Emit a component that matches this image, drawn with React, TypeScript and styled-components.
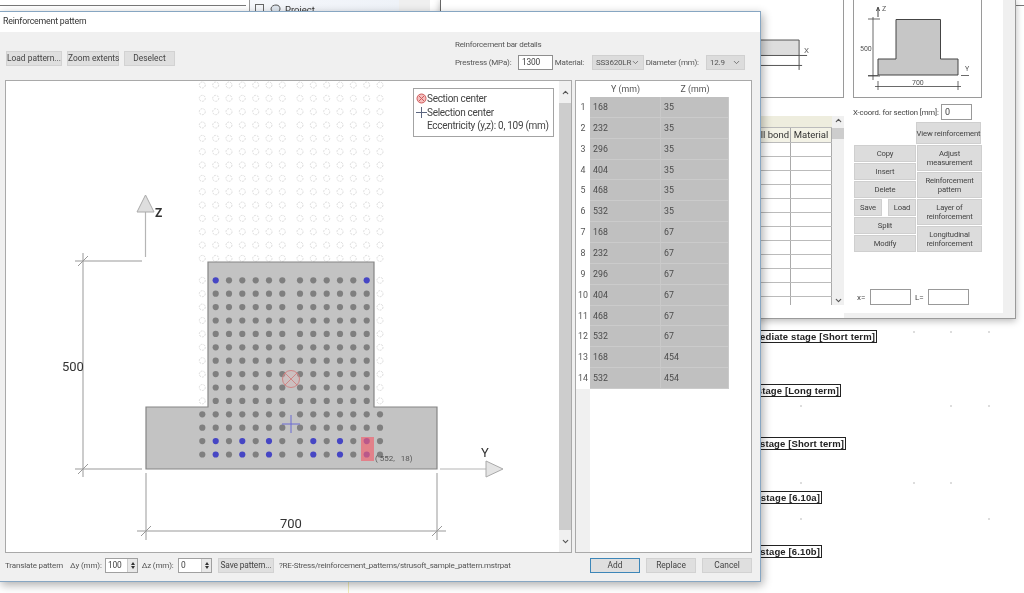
import React from 'react';
import { ChevronDown, ChevronUp } from 'lucide-react';
import styled, { createGlobalStyle } from 'styled-components';

const GlobalStyle = createGlobalStyle`
  html, body {
    margin: 0;
    padding: 0;
    background: #fff;
  }
  * {
    box-sizing: border-box;
  }
`;

const uiFont = `Roboto, 'Noto Sans', 'Liberation Sans', sans-serif`;

const Desktop = styled.div`
  position: relative;
  width: 1024px;
  height: 593px;
  overflow: hidden;
  background: #fff;
  font-family: ${uiFont};
  color: #444;
  filter: blur(0.3px);
`;

/* ---------- things behind the dialog ---------- */

const TopLeftPane = styled.div`
  position: absolute;
  left: 0;
  top: 0;
  width: 250px;
  height: 12px;
  border-right: 1px solid #999;
  &::before {
    content: '';
    display: block;
    margin-top: 5px;
    width: 246px;
    height: 1px;
    background: #777;
  }
`;

const TreePane = styled.div`
  position: absolute;
  left: 250px;
  top: 0;
  width: 180px;
  height: 12px;
  display: flex;
  align-items: flex-start;
  padding: 4px 0 0 5px;
  font-size: 9.5px;
  line-height: 11px;
  color: #333;
  background: linear-gradient(90deg, #f5f7fb 0, #eef2f8 83%, #efefef 83%);
`;

const TreeBox = styled.span`
  width: 9px;
  height: 9px;
  flex: none;
  border: 1px solid #666;
`;

const TreeIcon = styled.svg`
  width: 11px;
  height: 9px;
  flex: none;
  margin: 0 4px 0 6px;
`;

const CanvasLabel = styled.div<{ $top: number; $right: number }>`
  position: absolute;
  top: ${(p) => p.$top}px;
  right: ${(p) => 1024 - p.$right}px;
  height: 13px;
  padding: 0 1px;
  border: 1px solid #222;
  background: #fff;
  font-family: 'Liberation Sans', sans-serif;
  font-size: 9.5px;
  font-weight: 700;
  line-height: 11px;
  letter-spacing: 0.12px;
  white-space: nowrap;
  color: #222;
`;

const GridDot = styled.span<{ $x: number; $y: number }>`
  position: absolute;
  left: ${(p) => p.$x}px;
  top: ${(p) => p.$y}px;
  width: 2px;
  height: 2px;
  background: #ddd;
`;

const YellowGuide = styled.div`
  position: absolute;
  left: 348px;
  top: 582px;
  width: 1px;
  height: 11px;
  background: #f3eeb8;
`;

const BackLine = styled.div`
  position: absolute;
  left: 1016px;
  top: 5px;
  width: 8px;
  height: 1px;
  background: #777;
`;

const BackWindow = styled.div`
  position: absolute;
  left: 440px;
  top: -1px;
  width: 576px;
  height: 320px;
  display: flex;
  background: #fff;
  border-left: 1px solid #666;
  border-right: 1px solid #9a9a9a;
  border-bottom: 1px solid #9a9a9a;
  box-shadow: 0 2px 7px rgba(0, 0, 0, 0.28);
`;

const BackLeft = styled.div`
  width: 403px;
  display: flex;
  flex-direction: column;
`;

const Preview = styled.div`
  height: 99px;
  border-right: 1px solid #9a9a9a;
  border-bottom: 1px solid #9a9a9a;
`;

const PreviewSvg = styled.svg`
  display: block;
  width: 100%;
  height: 100%;
`;

const BackTable = styled.div`
  margin-top: 18px;
  height: 189px;
  display: flex;
`;

const BackTableBody = styled.div`
  flex: 1;
  display: flex;
  flex-direction: column;
  overflow: hidden;
`;

const BackRow = styled.div<{ $height: number; $bg: string }>`
  flex: none;
  height: ${(p) => p.$height}px;
  display: grid;
  grid-template-columns: 1fr 41px;
  background: ${(p) => p.$bg};
  border-bottom: 1px solid #bbb;
`;

const BackCell = styled.div`
  border-right: 1px solid #aaa;
  font-size: 9.5px;
  line-height: 14px;
  padding: 0 1px;
  text-align: right;
  color: #333;
  &:last-child {
    text-align: center;
  }
`;

const BackScroll = styled.div`
  width: 12px;
  display: flex;
  flex-direction: column;
  align-items: center;
  background: #f0f0f0;
  color: #555;
  justify-content: space-between;
  position: relative;
`;

const BackThumb = styled.div`
  position: absolute;
  top: 12px;
  left: 0;
  width: 12px;
  height: 11px;
  background: #cdcdcd;
`;

const BackRight = styled.div`
  width: 129px;
  margin-left: 9px;
  display: flex;
  flex-direction: column;
`;

const SideDrawing = styled.div`
  height: 99px;
  border: 1px solid #9a9a9a;
  border-top: none;
`;

const CoordRow = styled.div`
  height: 24px;
  display: flex;
  align-items: center;
  padding-top: 4px;
  font-size: 7.8px;
  letter-spacing: -0.15px;
  white-space: nowrap;
`;

const BackInput = styled.div<{ $width: number }>`
  width: ${(p) => p.$width}px;
  height: 16px;
  flex: none;
  border: 1px solid #999;
  background: #fff;
  font-size: 9px;
  line-height: 14px;
  padding-left: 3px;
`;

const BackButtons = styled.div`
  display: grid;
  grid-template-columns: 62px 65px;
  column-gap: 1px;
  padding-left: 1px;
`;

const ButtonStack = styled.div`
  display: flex;
  flex-direction: column;
  gap: 1px;
`;

const SideButton = styled.div<{ $height: number; $width?: number }>`
  height: ${(p) => p.$height}px;
  width: ${(p) => (p.$width ? `${p.$width}px` : 'auto')};
  background: #dcdcdc;
  border: 1px solid #cfcfcf;
  display: flex;
  align-items: center;
  justify-content: center;
  text-align: center;
  font-size: 7.7px;
  letter-spacing: -0.15px;
  line-height: 9px;
  white-space: nowrap;
  color: #444;
`;

const ViewRow = styled.div`
  display: flex;
  justify-content: flex-end;
  padding-right: 1px;
  margin-bottom: 1px;
`;

const SplitRow = styled.div`
  display: flex;
  justify-content: space-between;
`;

const LengthRow = styled.div`
  display: flex;
  align-items: center;
  margin-top: 37px;
  padding-left: 4px;
  font-size: 8px;
`;

const LengthLabel = styled.span<{ $width: number; $indent?: number }>`
  width: ${(p) => p.$width}px;
  padding-left: ${(p) => p.$indent ?? 0}px;
  flex: none;
`;

const SideStrip = styled.div`
  flex: 1;
  margin-left: 21px;
  background: #f0f0f0;
`;

const BottomStrip = styled.div`
  position: absolute;
  left: 403px;
  right: 0;
  bottom: 0;
  height: 5px;
  background: #f0f0f0;
`;

/* ---------- the dialog ---------- */

const Dialog = styled.div`
  position: absolute;
  left: -1px;
  top: 11px;
  width: 762px;
  height: 571px;
  display: flex;
  flex-direction: column;
  border: 1px solid #87a6c2;
  background: #f0f0f0;
  box-shadow: 2px 3px 9px rgba(0, 0, 0, 0.32);
`;

const TitleBar = styled.div`
  height: 20px;
  flex: none;
  padding-left: 3px;
  background: #fff;
  font-size: 8.8px;
  letter-spacing: -0.2px;
  line-height: 19px;
  color: #333;
`;

const DialogBody = styled.div`
  flex: 1;
  min-height: 0;
  display: flex;
  flex-direction: column;
  padding: 0 8px 0 5px;
`;

const ToolRow = styled.div`
  height: 48px;
  flex: none;
  display: flex;
  justify-content: space-between;
`;

const ToolButtons = styled.div`
  display: flex;
  gap: 5px;
  padding: 19px 0 0 1px;
`;

const ToolButton = styled.div<{ $width: number; $focused?: boolean }>`
  width: ${(p) => p.$width}px;
  height: 15px;
  flex: none;
  background: #dfdfdf;
  border: ${(p) => (p.$focused ? '1px solid #3d86b8' : '1px solid #d2d2d2')};
  font-size: 8.4px;
  line-height: 13px;
  text-align: center;
  white-space: nowrap;
  color: #444;
`;

const BarDetails = styled.div`
  width: 297px;
  padding-top: 7px;
`;

const GroupTitle = styled.div`
  font-size: 8px;
  letter-spacing: -0.2px;
  line-height: 11px;
  color: #555;
`;

const BarFields = styled.div`
  display: flex;
  align-items: center;
  margin-top: 5px;
  font-size: 8px;
  letter-spacing: -0.2px;
  color: #555;
  white-space: nowrap;
`;

const FieldLabel = styled.span<{ $width: number }>`
  width: ${(p) => p.$width}px;
  flex: none;
`;

const TextBox = styled.div<{ $width: number }>`
  width: ${(p) => p.$width}px;
  height: 15px;
  flex: none;
  border: 1px solid #8e8e8e;
  background: #fff;
  font-size: 8.4px;
  line-height: 13px;
  padding-left: 3px;
  color: #444;
`;

const Dropdown = styled.div<{ $width: number }>`
  width: ${(p) => p.$width}px;
  height: 15px;
  flex: none;
  display: flex;
  align-items: center;
  justify-content: space-between;
  padding: 0 3px;
  background: #dcdcdc;
  border: 1px solid #d0d0d0;
  color: #555;
`;

const MainRow = styled.div`
  height: 473px;
  flex: none;
  display: flex;
  gap: 3px;
`;

const CanvasPanel = styled.div`
  position: relative;
  width: 567px;
  flex: none;
  display: flex;
  background: #fff;
  border: 1px solid #a9a9a9;
`;

const DrawingSvg = styled.svg`
  display: block;
  flex: 1;
  height: 100%;
`;

const VScroll = styled.div`
  width: 12px;
  flex: none;
  display: flex;
  flex-direction: column;
  align-items: center;
  background: #f0f0f0;
  color: #555;
`;

const ScrollEnd = styled.div`
  height: 22px;
  flex: none;
  padding-top: 1px;
`;

const ScrollThumb = styled.div`
  flex: 1;
  width: 100%;
  background: #cdcdcd;
`;

const Legend = styled.div`
  position: absolute;
  left: 407px;
  top: 7px;
  width: 141px;
  height: 49px;
  padding: 3px 0 0 2px;
  background: #fff;
  border: 1px solid #a3a3a3;
  font-size: 10px;
  letter-spacing: -0.3px;
  line-height: 13.5px;
  color: #444;
`;

const LegendRow = styled.div`
  display: flex;
  align-items: center;
  white-space: nowrap;
`;

const LegendIcon = styled.svg`
  width: 11px;
  height: 11px;
  flex: none;
`;

const LegendIndent = styled.div`
  padding-left: 11px;
  white-space: nowrap;
`;

const TablePanel = styled.div`
  flex: 1;
  min-width: 0;
  display: flex;
  flex-direction: column;
  background: #fff;
  border: 1px solid #a9a9a9;
  padding-top: 1px;
`;

const GridTable = styled.div`
  display: grid;
  flex: none;
  grid-template-columns: 14px 71px 68px;
  grid-template-rows: 15px repeat(14, 20.86px);
  width: 153px;
`;

const HeadCell = styled.div`
  font-size: 8.8px;
  line-height: 15px;
  text-align: center;
  color: #555;
  background: #fff;
`;

const RowNumber = styled.div`
  font-size: 8.8px;
  line-height: 21px;
  text-align: center;
  background: #fff;
  color: #555;
`;

const ValueCell = styled.div`
  padding-left: 3px;
  background: #c0c0c0;
  border-bottom: 1px solid #cbcbcb;
  border-right: 1px solid #c9c9c9;
  font-size: 8.8px;
  line-height: 20px;
  color: #4b4b4b;
`;

const HeaderGutter = styled.div`
  width: 14px;
  flex: 1;
  background: #f0f0f0;
`;

const Footer = styled.div`
  flex: 1;
  display: flex;
  align-items: flex-start;
  justify-content: space-between;
  padding-top: 5px;
`;

const TranslateGroup = styled.div`
  display: flex;
  align-items: center;
  height: 15px;
  font-size: 8px;
  letter-spacing: -0.15px;
  color: #555;
  white-space: nowrap;
`;

const Stepper = styled.div<{ $width: number }>`
  width: ${(p) => p.$width}px;
  height: 15px;
  flex: none;
  display: flex;
  justify-content: space-between;
  border: 1px solid #a0a0a0;
  background: #fff;
  font-size: 8.4px;
  line-height: 13px;
  padding-left: 2px;
  color: #444;
`;

const SpinColumn = styled.div`
  width: 10px;
  display: flex;
  flex-direction: column;
  align-items: center;
  justify-content: center;
  gap: 1px;
  background: #e8e8e8;
  border-left: 1px solid #ccc;
`;

const SpinUp = styled.span`
  width: 0;
  height: 0;
  border-left: 2.5px solid transparent;
  border-right: 2.5px solid transparent;
  border-bottom: 3px solid #333;
`;

const SpinDown = styled(SpinUp)`
  transform: rotate(180deg);
`;

const PathText = styled.span`
  margin-left: 5px;
  font-size: 8px;
  letter-spacing: -0.2px;
  color: #555;
`;

const ActionButtons = styled.div`
  display: flex;
  gap: 6px;
`;

/* ---------- data ---------- */

const bars: [number, number][] = [
  [168, 35],
  [232, 35],
  [296, 35],
  [404, 35],
  [468, 35],
  [532, 35],
  [168, 67],
  [232, 67],
  [296, 67],
  [404, 67],
  [468, 67],
  [532, 67],
  [168, 454],
  [532, 454],
];

const columns = [202.3, 215.7, 229, 242.3, 255.7, 269, 282.3, 300, 313.3, 326.7, 340, 353.3, 366.7, 380];
const sectionRows = Array.from({ length: 14 }, (_, i) => 280.3 + i * 13.4);
const freeRows = Array.from({ length: 14 }, (_, i) => 85 + i * 13.34);

const isSelected = (row: number, col: number) => {
  if (row === 0) return col === 1 || col === 12;
  if (row >= 12) return [1, 3, 5, 8, 10, 12].includes(col);
  return false;
};

const Tick = ({ x, y }: { x: number; y: number }) => (
  <path d={`M${x - 5} ${y + 5}L${x + 5} ${y - 5}`} stroke='#999' fill='none' />
);

const SectionDrawing = () => {
  const free: React.ReactNode[] = [];
  freeRows.forEach((y, r) =>
    columns.forEach((x, c) =>
      free.push(<circle key={`f${r}-${c}`} cx={x} cy={y} r={3} fill='none' stroke='#dcdcdc' strokeDasharray='2 1' />),
    ),
  );
  sectionRows.slice(0, 10).forEach((y, r) =>
    [0, 13].forEach((c) =>
      free.push(<circle key={`s${r}-${c}`} cx={columns[c]} cy={y} r={3} fill='none' stroke='#dcdcdc' strokeDasharray='2 1' />),
    ),
  );
  return (
    <DrawingSvg viewBox='6 81 553 471'>
      {free}
      <path
        d='M208 262H374V407H437V469H146V407H208Z'
        fill='#c3c3c3'
        stroke='#858585'
        strokeWidth={1.2}
      />
      {sectionRows.map((y, r) =>
        columns.map((x, c) => {
          if (r < 10 && (c === 0 || c === 13)) return null;
          return <circle key={`${r}-${c}`} cx={x} cy={y} r={3.1} fill={isSelected(r, c) ? '#4646c4' : '#7f7f7f'} />;
        }),
      )}
      <rect x={361} y={437} width={13} height={24} fill='#f0616e' opacity={0.68} />
      <circle cx={291} cy={379} r={8.5} fill='#e9b4b4' fillOpacity={0.25} stroke='#cf8585' />
      <path d='M285 373L297 385M297 373L285 385' stroke='#cf8585' fill='none' />
      <path d='M282 424H300M291 415V433' stroke='#6a6ad2' fill='none' />
      <text x={375} y={461} fontSize={8} fill='#555' xmlSpace='preserve'>
        ( 552,   18)
      </text>

      {/* z axis */}
      <path d='M145.5 212V257' stroke='#b5b5b5' strokeWidth={1.2} fill='none' />
      <path d='M145.5 195L137 212H154Z' fill='#dedede' stroke='#aaa' />
      <text x={155} y={217} fontSize={12} fontWeight={700} fill='#333'>
        Z
      </text>

      {/* y axis */}
      <path d='M440 469H486' stroke='#b5b5b5' strokeWidth={1.2} fill='none' />
      <path d='M486 461L503 469L486 477Z' fill='#e4e4e4' stroke='#aaa' />
      <text x={481} y={457} fontSize={13} fill='#333'>
        Y
      </text>

      {/* height dimension */}
      <path d='M75 261H142M75 469H142M83 253V477' stroke='#999' fill='none' />
      <Tick x={83} y={261} />
      <Tick x={83} y={469} />
      <text x={62} y={371} fontSize={13} fill='#333'>
        500
      </text>

      {/* width dimension */}
      <path d='M137 531H446M146 473V540M437 473V540' stroke='#999' fill='none' />
      <Tick x={146} y={531} />
      <Tick x={437} y={531} />
      <text x={280} y={528} fontSize={13} fill='#333'>
        700
      </text>
    </DrawingSvg>
  );
};

const Spinner = ({ value, width }: { value: string; width: number }) => (
  <Stepper $width={width}>
    {value}
    <SpinColumn>
      <SpinUp />
      <SpinDown />
    </SpinColumn>
  </Stepper>
);

const backRows = Array.from({ length: 12 }, (_, i) => i);

const BackgroundWindow = () => (
  <BackWindow>
    <BackLeft>
      <Preview>
        <PreviewSvg viewBox='441 0 403 98'>
          <path d='M700 41H800V56.5H700' fill='#ddd' stroke='#555' />
          <path d='M700 66.5H803M800 56V71M800 56.5H808' stroke='#555' fill='none' />
          <text x={805} y={54} fontSize={8} fill='#666'>
            X
          </text>
        </PreviewSvg>
      </Preview>
      <BackTable>
        <BackTableBody>
          <BackRow $height={12} $bg='#eeedde' />
          <BackRow $height={15} $bg='#f3f2e6'>
            <BackCell>Wall bond</BackCell>
            <BackCell>Material</BackCell>
          </BackRow>
          {backRows.map((r) => (
            <BackRow key={r} $height={14} $bg='#fff'>
              <BackCell />
              <BackCell />
            </BackRow>
          ))}
        </BackTableBody>
        <BackScroll>
          <ChevronUp size={9} strokeWidth={3} />
          <BackThumb />
          <ChevronDown size={9} strokeWidth={3} />
        </BackScroll>
      </BackTable>
    </BackLeft>
    <BackRight>
      <SideDrawing>
        <PreviewSvg viewBox='854 0 127 98'>
          <path d='M896 20.5H940.5V60H958V76H878V60H896Z' fill='#c6c6c6' stroke='#444' />
          <path
            d='M873 18V81M868 20H880M868 77H880M878 82V91M958 82V91M875 87.5H961M961 76.5H969M878 76.5H868'
            stroke='#444'
            fill='none'
            strokeWidth={0.8}
          />
          <path d='M878 18V10M876.5 12L878 8L879.5 12' stroke='#444' fill='none' />
          <text x={882} y={12} fontSize={7} fill='#555'>
            Z
          </text>
          <text x={860} y={52} fontSize={7} fill='#555'>
            500
          </text>
          <text x={912} y={86} fontSize={7} fill='#555'>
            700
          </text>
          <text x={965} y={72} fontSize={7} fill='#555'>
            Y
          </text>
        </PreviewSvg>
      </SideDrawing>
      <CoordRow>
        <LengthLabel $width={88}>X-coord. for section [mm]:</LengthLabel>
        <BackInput $width={31}>0</BackInput>
      </CoordRow>
      <ViewRow>
        <SideButton $height={22} $width={65}>
          View reinforcement
        </SideButton>
      </ViewRow>
      <BackButtons>
        <ButtonStack>
          <SideButton $height={17}>Copy</SideButton>
          <SideButton $height={17}>Insert</SideButton>
          <SideButton $height={17}>Delete</SideButton>
          <SplitRow>
            <SideButton $height={17} $width={28}>
              Save
            </SideButton>
            <SideButton $height={17} $width={28}>
              Load
            </SideButton>
          </SplitRow>
          <SideButton $height={17}>Split</SideButton>
          <SideButton $height={17}>Modify</SideButton>
        </ButtonStack>
        <ButtonStack>
          <SideButton $height={26}>
            Adjust
            <br />
            measurement
          </SideButton>
          <SideButton $height={26}>
            Reinforcement
            <br />
            pattern
          </SideButton>
          <SideButton $height={26}>
            Layer of
            <br />
            reinforcement
          </SideButton>
          <SideButton $height={26}>
            Longitudinal
            <br />
            reinforcement
          </SideButton>
        </ButtonStack>
      </BackButtons>
      <LengthRow>
        <LengthLabel $width={13}>x=</LengthLabel>
        <BackInput $width={41} />
        <LengthLabel $width={17} $indent={4}>
          L=
        </LengthLabel>
        <BackInput $width={41} />
      </LengthRow>
    </BackRight>
    <SideStrip />
    <BottomStrip />
  </BackWindow>
);

const gridDots = [
  [913, 331],
  [950, 331],
  [988, 331],
  [800, 405],
  [800, 482],
  [800, 518],
  [950, 405],
  [988, 405],
  [913, 482],
  [950, 482],
  [988, 518],
];

const App = () => {
  return (
    <Desktop>
      <GlobalStyle />
      <TopLeftPane />
      <TreePane>
        <TreeBox />
        <TreeIcon viewBox='0 0 11 9'>
          <path d='M1 5C1 2 4 1 6 1C9 1 10 3 10 5C10 7 8 8 6 8C3 8 1 7 1 5Z' fill='#dfe6ee' stroke='#555' />
        </TreeIcon>
        Project
      </TreePane>
      <BackLine />
      <YellowGuide />
      <BackgroundWindow />
      {gridDots.map(([x, y]) => (
        <GridDot key={`${x}-${y}`} $x={x} $y={y} />
      ))}
      <CanvasLabel $top={330} $right={877}>
        Intermediate stage [Short term]
      </CanvasLabel>
      <CanvasLabel $top={384} $right={841}>
        Final stage [Long term]
      </CanvasLabel>
      <CanvasLabel $top={437} $right={846}>
        Final stage [Short term]
      </CanvasLabel>
      <CanvasLabel $top={491} $right={822}>
        Final stage [6.10a]
      </CanvasLabel>
      <CanvasLabel $top={545} $right={822}>
        Final stage [6.10b]
      </CanvasLabel>

      <Dialog>
        <TitleBar>Reinforcement pattern</TitleBar>
        <DialogBody>
          <ToolRow>
            <ToolButtons>
              <ToolButton $width={56}>Load pattern...</ToolButton>
              <ToolButton $width={52}>Zoom extents</ToolButton>
              <ToolButton $width={51}>Deselect</ToolButton>
            </ToolButtons>
            <BarDetails>
              <GroupTitle>Reinforcement bar details</GroupTitle>
              <BarFields>
                <FieldLabel $width={63}>Prestress (MPa):</FieldLabel>
                <TextBox $width={35}>1300</TextBox>
                <FieldLabel $width={39}>&nbsp;Material:</FieldLabel>
                <Dropdown $width={52}>
                  SS3620LR
                  <ChevronDown size={9} />
                </Dropdown>
                <FieldLabel $width={62}>&nbsp;Diameter (mm):</FieldLabel>
                <Dropdown $width={39}>
                  12.9
                  <ChevronDown size={9} />
                </Dropdown>
              </BarFields>
            </BarDetails>
          </ToolRow>
          <MainRow>
            <CanvasPanel>
              <SectionDrawing />
              <VScroll>
                <ScrollEnd>
                  <ChevronUp size={9} strokeWidth={3} />
                </ScrollEnd>
                <ScrollThumb />
                <ScrollEnd>
                  <ChevronDown size={9} strokeWidth={3} />
                </ScrollEnd>
              </VScroll>
              <Legend>
                <LegendRow>
                  <LegendIcon viewBox='0 0 11 11'>
                    <circle cx={5.5} cy={5.5} r={4.5} fill='#f3c0c0' stroke='#d05a5a' />
                    <path d='M3 3L8 8M8 3L3 8' stroke='#d05a5a' />
                  </LegendIcon>
                  Section center
                </LegendRow>
                <LegendRow>
                  <LegendIcon viewBox='0 0 11 11'>
                    <path d='M0 5.5H11M5.5 0V11' stroke='#5c6680' />
                  </LegendIcon>
                  Selection center
                </LegendRow>
                <LegendIndent>Eccentricity (y,z): 0, 109 (mm)</LegendIndent>
              </Legend>
            </CanvasPanel>
            <TablePanel>
              <GridTable>
                <HeadCell />
                <HeadCell>Y (mm)</HeadCell>
                <HeadCell>Z (mm)</HeadCell>
                {bars.map(([y, z], i) => (
                  <React.Fragment key={i}>
                    <RowNumber>{i + 1}</RowNumber>
                    <ValueCell>{y}</ValueCell>
                    <ValueCell>{z}</ValueCell>
                  </React.Fragment>
                ))}
              </GridTable>
              <HeaderGutter />
            </TablePanel>
          </MainRow>
          <Footer>
            <TranslateGroup>
              <FieldLabel $width={65}>Translate pattern</FieldLabel>
              <FieldLabel $width={35}>Δy (mm):</FieldLabel>
              <Spinner value='100' width={33} />
              <FieldLabel $width={40}>&nbsp;&nbsp;Δz (mm):</FieldLabel>
              <Spinner value='0' width={34} />
              <FieldLabel $width={6} />
              <ToolButton $width={56}>Save pattern...</ToolButton>
              <PathText>?RE-Stress/reinforcement_patterns/strusoft_sample_pattern.mstrpat</PathText>
            </TranslateGroup>
            <ActionButtons>
              <ToolButton $width={50} $focused>
                Add
              </ToolButton>
              <ToolButton $width={50}>Replace</ToolButton>
              <ToolButton $width={50}>Cancel</ToolButton>
            </ActionButtons>
          </Footer>
        </DialogBody>
      </Dialog>
    </Desktop>
  );
};

export default App;
